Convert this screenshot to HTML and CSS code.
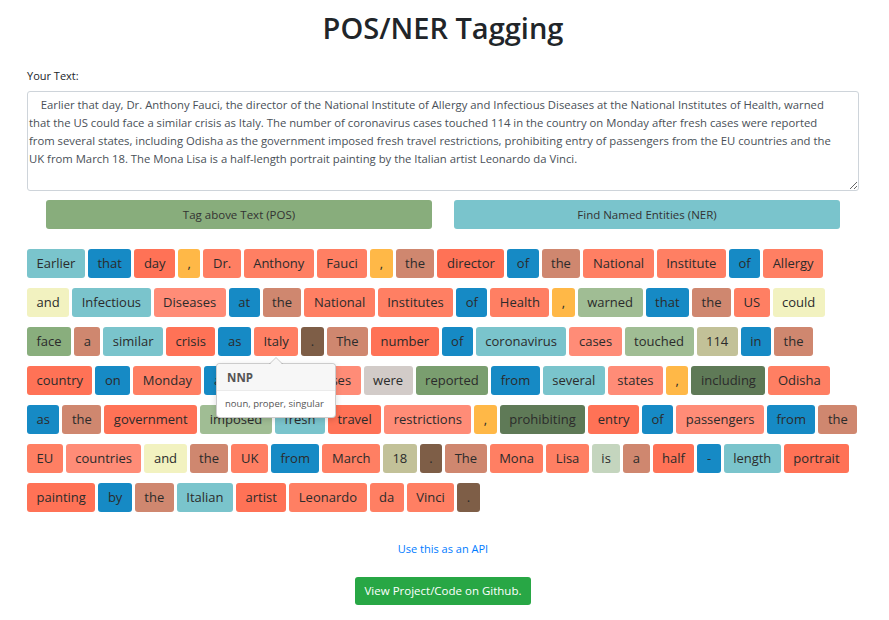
FILE: index.html
```html
<!DOCTYPE html>
<html lang="en">
<head>
<meta charset="utf-8">
<title>POS/NER Tagging</title>
<link rel="stylesheet" href="styles.css">
</head>
<body>
<main class="page">
  <h1 class="title">POS/NER Tagging</h1>
  <label class="label" for="text">Your Text:</label>
  <textarea id="text" class="input">    Earlier that day, Dr. Anthony Fauci, the director of the National Institute of Allergy and Infectious Diseases at the National Institutes of Health, warned that the US could face a similar crisis as Italy. The number of coronavirus cases touched 114 in the country on Monday after fresh cases were reported from several states, including Odisha as the government imposed fresh travel restrictions, prohibiting entry of passengers from the EU countries and the UK from March 18. The Mona Lisa is a half-length portrait painting by the Italian artist Leonardo da Vinci.</textarea>
  <div class="actions">
    <button class="btn btn-pos" type="button">Tag above Text (POS)</button>
    <button class="btn btn-ner" type="button">Find Named Entities (NER)</button>
  </div>
  <div class="tokens">
    <span class="tok jj">Earlier</span><span class="tok in">that</span><span class="tok nn">day</span><span class="tok pc">,</span><span class="tok nnp">Dr.</span><span class="tok nnp">Anthony</span><span class="tok nnp">Fauci</span><span class="tok pc">,</span><span class="tok dt">the</span><span class="tok nn">director</span><span class="tok in">of</span><span class="tok dt">the</span><span class="tok nnp">National</span><span class="tok nnp">Institute</span><span class="tok in">of</span><span class="tok nnp">Allergy</span>
    <span class="tok cc">and</span><span class="tok jj">Infectious</span><span class="tok nns">Diseases</span><span class="tok in">at</span><span class="tok dt">the</span><span class="tok nnp">National</span><span class="tok nnp">Institutes</span><span class="tok in">of</span><span class="tok nnp">Health</span><span class="tok pc">,</span><span class="tok vbd">warned</span><span class="tok in">that</span><span class="tok dt">the</span><span class="tok nnp">US</span><span class="tok cc">could</span>
    <span class="tok vb">face</span><span class="tok dt">a</span><span class="tok jj">similar</span><span class="tok nn">crisis</span><span class="tok in">as</span><span class="tok nnp has-tip">Italy<span class="tip"><span class="tip-head">NNP</span><span class="tip-body">noun, proper, singular</span></span></span><span class="tok per">.</span><span class="tok dt">The</span><span class="tok nn">number</span><span class="tok in">of</span><span class="tok jj">coronavirus</span><span class="tok nns">cases</span><span class="tok vbd">touched</span><span class="tok cd">114</span><span class="tok in">in</span><span class="tok dt">the</span>
    <span class="tok nn">country</span><span class="tok in">on</span><span class="tok nnp">Monday</span><span class="tok in">after</span><span class="tok jj">fresh</span><span class="tok nns">cases</span><span class="tok vbp">were</span><span class="tok vbn">reported</span><span class="tok in">from</span><span class="tok jj">several</span><span class="tok nns">states</span><span class="tok pc">,</span><span class="tok vbg">including</span><span class="tok nnp">Odisha</span>
    <span class="tok in">as</span><span class="tok dt">the</span><span class="tok nn">government</span><span class="tok vbd">imposed</span><span class="tok jj">fresh</span><span class="tok nn">travel</span><span class="tok nns">restrictions</span><span class="tok pc">,</span><span class="tok vbg">prohibiting</span><span class="tok nn">entry</span><span class="tok in">of</span><span class="tok nns">passengers</span><span class="tok in">from</span><span class="tok dt">the</span>
    <span class="tok nnp">EU</span><span class="tok nns">countries</span><span class="tok cc">and</span><span class="tok dt">the</span><span class="tok nnp">UK</span><span class="tok in">from</span><span class="tok nnp">March</span><span class="tok cd">18</span><span class="tok per">.</span><span class="tok dt">The</span><span class="tok nnp">Mona</span><span class="tok nnp">Lisa</span><span class="tok vbz">is</span><span class="tok dt">a</span><span class="tok nn">half</span><span class="tok in">-</span><span class="tok jj">length</span><span class="tok nn">portrait</span>
    <span class="tok nn">painting</span><span class="tok in">by</span><span class="tok dt">the</span><span class="tok jj">Italian</span><span class="tok nn">artist</span><span class="tok nnp">Leonardo</span><span class="tok nnp">da</span><span class="tok nnp">Vinci</span><span class="tok per">.</span>
  </div>
  <div class="footer">
    <a class="api-link" href="#">Use this as an API</a>
    <a class="btn-github" href="#">View Project/Code on Github.</a>
  </div>
</main>
</body>
</html>
```
FILE: styles.css
```css
* { box-sizing: border-box; }
html, body { margin: 0; padding: 0; background: #fff; }
body {
  font-family: "Open Sans", "Liberation Sans", sans-serif;
  color: #212529;
}
.page {
  padding: 0 30px 0 27px;
  display: flex;
  flex-direction: column;
}
.title {
  margin: 11px 0 0;
  text-align: center;
  font-size: 29px;
  line-height: 34px;
  font-weight: 600;
  color: #212529;
}
.label {
  margin-top: 22px;
  font-size: 11px;
  line-height: 18px;
  color: #212529;
}
.input {
  margin-top: 6px;
  width: 100%;
  height: 100px;
  padding: 4px 16px 3px 1px;
  border: 1px solid #ced4da;
  border-radius: 3px;
  font-family: "Open Sans", "Liberation Sans", sans-serif;
  font-size: 11.3px;
  line-height: 18px;
  color: #495057;
  resize: vertical;
}
.actions {
  margin-top: 9px;
  padding: 0 19px;
  display: grid;
  grid-template-columns: 1fr 1fr;
  column-gap: 22px;
}
.btn {
  height: 29px;
  border: 0;
  border-radius: 3px;
  font-family: "Open Sans", "Liberation Sans", sans-serif;
  font-size: 11.5px;
  color: #333;
}
.btn-pos { background: #88ad7c; }
.btn-ner { background: #7ac4cc; }
.tokens {
  margin-top: 20px;
  display: flex;
  flex-wrap: wrap;
  column-gap: 3px;
  row-gap: 10px;
}
.tok {
  height: 29px;
  padding: 0 9.5px;
  border-radius: 3px;
  font-size: 13px;
  line-height: 29px;
  color: #2b2b2b;
  white-space: nowrap;
}
.jj { background: #7ac4cc; }
.in { background: #168ac5; }
.nn { background: #ff7256; }
.pc { background: #ffb847; }
.nnp { background: #ff7f63; }
.dt { background: #cf876f; }
.nns { background: #ff8c77; }
.cc { background: #f2f2c0; }
.vbd { background: #a0bd94; }
.vb { background: #89ae7d; }
.cd { background: #c2c198; }
.per { background: #7e5e47; }
.vbp { background: #d2cbc8; }
.vbn { background: #7a9e6f; }
.vbg { background: #5f7a57; }
.vbz { background: #c4d5be; }
.has-tip { position: relative; }
.tip {
  position: absolute;
  top: calc(100% + 7px);
  left: 50%;
  transform: translateX(-50%);
  width: 120px;
  background: #fff;
  border: 1px solid rgba(0, 0, 0, 0.2);
  border-radius: 4px;
  box-shadow: 0 2px 6px rgba(0, 0, 0, 0.15);
  z-index: 5;
  display: flex;
  flex-direction: column;
  line-height: normal;
}
.tip::before, .tip::after {
  content: "";
  position: absolute;
  left: 50%;
  transform: translateX(-50%);
  border-style: solid;
  border-color: transparent;
}
.tip::before {
  top: -7px;
  border-width: 0 7px 7px;
  border-bottom-color: rgba(0, 0, 0, 0.2);
}
.tip::after {
  top: -6px;
  border-width: 0 6px 6px;
  border-bottom-color: #f7f7f7;
}
.tip-head {
  height: 27px;
  padding: 0 10px;
  background: #f7f7f7;
  border-bottom: 1px solid #ebebeb;
  border-radius: 4px 4px 0 0;
  font-size: 11.5px;
  font-weight: 700;
  line-height: 27px;
  color: #555;
}
.tip-body {
  padding: 6px 8px 7px;
  font-size: 9.5px;
  color: #555;
}
.footer {
  display: flex;
  flex-direction: column;
  align-items: center;
  margin-top: 28px;
}
.api-link {
  font-size: 11px;
  line-height: 18px;
  color: #007bff;
  text-decoration: none;
}
.btn-github {
  margin-top: 19px;
  height: 28px;
  padding: 0 10px;
  background: #28a745;
  border-radius: 3px;
  color: #fff;
  font-size: 11.5px;
  line-height: 28px;
  text-decoration: none;
}
```
